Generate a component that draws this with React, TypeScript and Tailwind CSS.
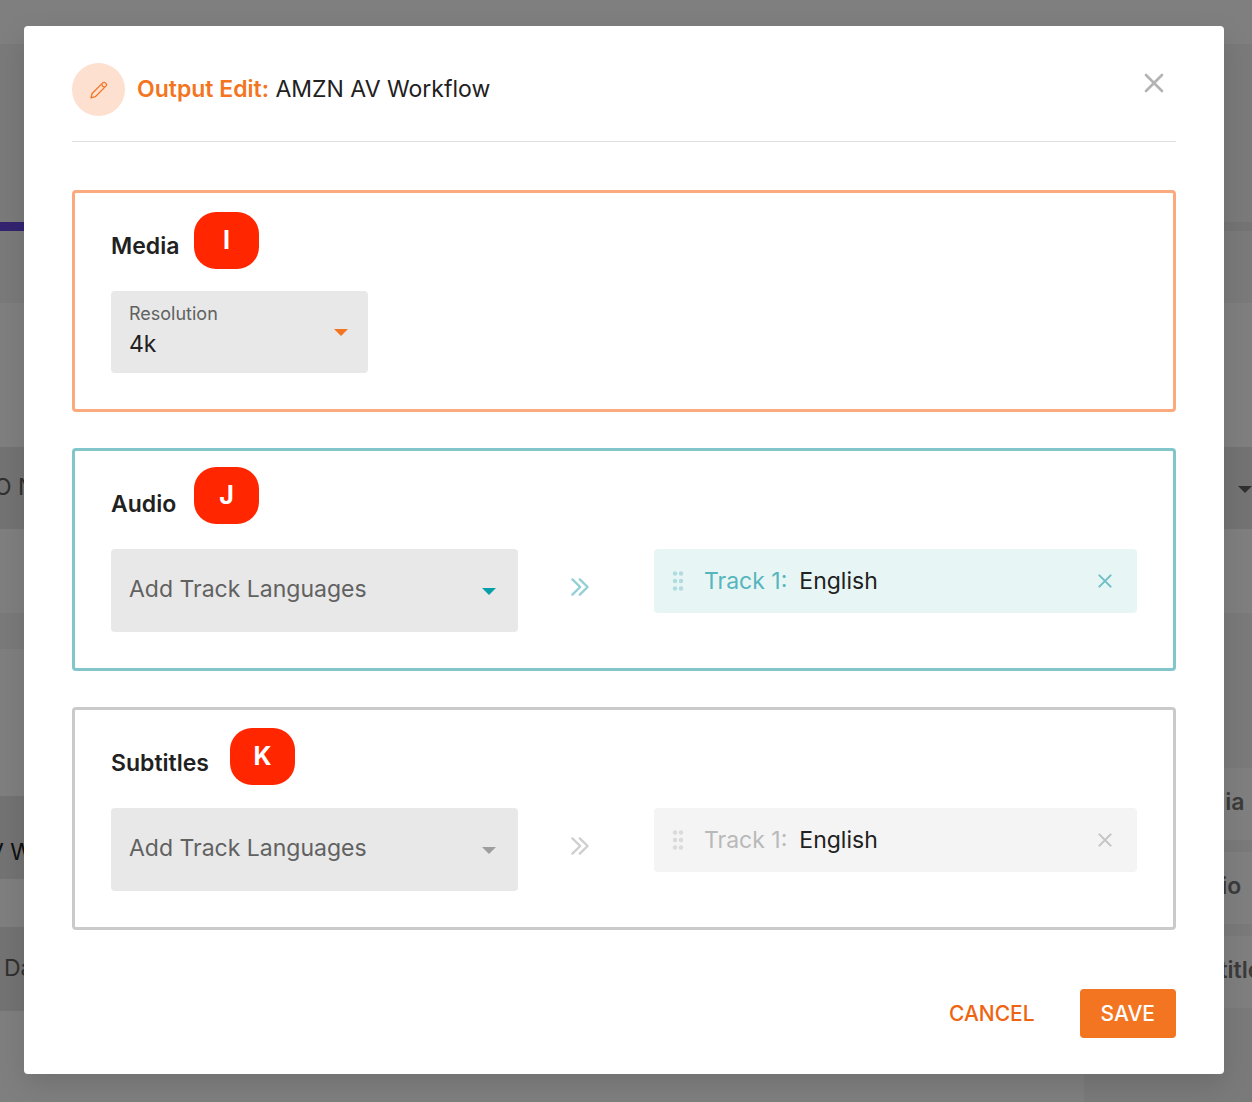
import React from "react";

function Caret({ className }: { className: string }) {
  return (
    <svg viewBox="0 0 14 7" aria-hidden="true" className={`pointer-events-none absolute h-[7px] w-[14px] ${className}`}>
      <path d="M0 0h14L7 7z" fill="currentColor" />
    </svg>
  );
}

function Cross({ className, strokeWidth }: { className: string; strokeWidth: number }) {
  return (
    <svg viewBox="0 0 20 20" aria-hidden="true" fill="none" stroke="currentColor" strokeWidth={strokeWidth} strokeLinecap="round" className={className}>
      <path d="M2 2l16 16M18 2L2 18" />
    </svg>
  );
}

function Pencil() {
  return (
    <svg viewBox="0 0 20 20" aria-hidden="true" fill="none" stroke="currentColor" strokeWidth="1.3" strokeLinejoin="round" className="size-5">
      <path d="M2 17.8l1.1-4.3L13.7 2.9a1.9 1.9 0 0 1 2.7 0l.5.5a1.9 1.9 0 0 1 0 2.7L6.3 16.7z" />
      <path d="M12.6 4.1c.4 1.8 1.3 2.7 3.1 3.1" />
    </svg>
  );
}

function Chevrons({ className }: { className: string }) {
  return (
    <svg viewBox="0 0 20 20" aria-hidden="true" fill="none" stroke="currentColor" strokeWidth="2.4" strokeLinecap="round" strokeLinejoin="round" className={`size-5 ${className}`}>
      <path d="M2.4 2.4l7.8 7.6-7.8 7.6M9.8 2.4l7.8 7.6-7.8 7.6" />
    </svg>
  );
}

function DragDots({ className }: { className: string }) {
  return (
    <svg viewBox="0 0 12 20" aria-hidden="true" fill="currentColor" className={`h-5 w-3 ${className}`}>
      {[2.5, 10, 17.5].map((y) => (
        <React.Fragment key={y}>
          <circle cx="3" cy={y} r="2.2" />
          <circle cx="9" cy={y} r="2.2" />
        </React.Fragment>
      ))}
    </svg>
  );
}

function Panel({ title, badge, border, badgePlace, children }: {
  title: string;
  badge: string;
  border: string;
  badgePlace: string;
  children: React.ReactNode;
}) {
  return (
    <section className={`relative rounded-[4px] border-[3px] p-9 ${border}`}>
      <h2 className="mb-7 text-[23px] leading-[34px] font-semibold">{title}</h2>
      <span className={`absolute flex h-[57px] w-[65px] items-center justify-center rounded-[22px] bg-[#ff2600] text-[25px] font-bold text-white ${badgePlace}`}>
        {badge}
      </span>
      {children}
    </section>
  );
}

function TrackRow({ id, caret, arrow, chip, dots, label, cross }: {
  id: string;
  caret: string;
  arrow: string;
  chip: string;
  dots: string;
  label: string;
  cross: string;
}) {
  return (
    <div className="grid grid-cols-[407fr_136fr_483fr] items-start">
      <div className="relative">
        <select id={id} aria-label="Add Track Languages" className="block h-[83px] w-full appearance-none rounded-[4px] bg-[#e8e8e8] pr-12 pb-0.5 pl-[18px] text-[23px] text-[#616161]">
          <option>Add Track Languages</option>
        </select>
        <Caret className={`top-[39px] right-[22px] ${caret}`} />
      </div>
      <div className="flex justify-center pt-7 pr-3">
        <Chevrons className={arrow} />
      </div>
      <div className={`flex h-16 items-center rounded-[4px] pr-[22px] pl-[18px] text-[23px] ${chip}`}>
        <DragDots className={dots} />
        <span className={`ml-5 ${label}`}>Track 1:</span>
        <span className="ml-3">English</span>
        <button aria-label="Remove track" className={`ml-auto flex size-5 items-center justify-center ${cross}`}>
          <Cross className="size-[14px]" strokeWidth={2.9} />
        </button>
      </div>
    </div>
  );
}

function PageBehind() {
  return (
    <div aria-hidden="true" className="absolute inset-0 flex flex-col overflow-hidden bg-[#f5f5f5] text-[23px] whitespace-nowrap">
      <div className="h-11 shrink-0 bg-white" />
      <div className="h-[178px] shrink-0" />
      <div className="flex h-[9px] shrink-0 bg-[#e8e8e8]">
        <div className="w-1/2 bg-[#6846e0]" />
      </div>
      <div className="h-[72px] shrink-0" />
      <div className="h-[310px] shrink-0 bg-white pt-36">
        <div className="relative flex h-[82px] items-center bg-[#e6e6e6] pb-0.5 text-[#616161]">
          <span className="-ml-1.5">O N</span>
          <Caret className="top-[39px] right-0 text-[#616161]" />
        </div>
      </div>
      <div className="h-9 shrink-0" />
      <div className="flex grow">
        <div className="grow bg-white pt-[147px]">
          <div className="flex h-[83px] items-end bg-[#e6e6e6] pb-2.5">
            <span className="-ml-3">V W</span>
          </div>
          <div className="mt-12 flex h-[84px] items-center bg-[#e6e6e6] pb-0.5 pl-1 text-[#616161]">Data</div>
        </div>
        <div className="flex w-[168px] flex-col gap-3 pt-[119px] font-semibold text-[#777777]">
          {["Media", "Audio", "Subtitles"].map((name) => (
            <div key={name} className="flex h-[72px] items-center bg-white pb-1 pl-[92px]">{name}</div>
          ))}
        </div>
      </div>
    </div>
  );
}

export default function App() {
  return (
    <div className="relative min-h-screen overflow-hidden font-['Inter',sans-serif] text-[#212121]">
      <PageBehind />
      <div className="relative min-h-screen bg-black/50 pt-[26px] pr-7 pb-7 pl-6">
        <div role="dialog" aria-modal="true" aria-labelledby="dialog-title" className="rounded-[4px] bg-white px-12 pt-[37px] pb-9 shadow-[0_10px_28px_rgba(0,0,0,0.12)]">
          <header className="flex items-center border-b border-[#e0e0e0] pb-[25px]">
            <span className="flex size-[53px] items-center justify-center rounded-full bg-[#fde0d0] text-[#f47521]">
              <Pencil />
            </span>
            <h1 id="dialog-title" className="ml-3 text-[23px]">
              <span className="font-semibold text-[#f47521]">Output Edit:</span> AMZN AV Workflow
            </h1>
            <button aria-label="Close" className="ml-auto flex h-10 w-11 items-center justify-center self-start text-[#b3b3b3]">
              <Cross className="size-5" strokeWidth={2.6} />
            </button>
          </header>

          <div className="mt-12 flex flex-col gap-9">
            <Panel title="Media" badge="I" border="border-[#fbaa7f]" badgePlace="top-[19px] left-[119px]">
              <div className="relative w-[257px]">
                <label htmlFor="resolution" className="pointer-events-none absolute top-3 left-[18px] text-[18px] leading-[22px] text-[#616161]">Resolution</label>
                <select id="resolution" className="block h-[82px] w-full appearance-none rounded-[4px] bg-[#e8e8e8] pt-6 pr-12 pl-[18px] text-[23px]">
                  <option>4k</option>
                </select>
                <Caret className="top-[38px] right-[20px] text-[#f47521]" />
              </div>
            </Panel>
            <Panel title="Audio" badge="J" border="border-[#82c6cb]" badgePlace="top-4 left-[119px]">
              <TrackRow
                id="audio-languages"
                caret="text-[#0a9fa8]"
                arrow="text-[#93d0d5]"
                chip="bg-[#e8f5f5]"
                dots="text-[#b0dcdf]"
                label="text-[#56b6bd]"
                cross="text-[#6dc0c6]"
              />
            </Panel>
            <Panel title="Subtitles" badge="K" border="border-[#cacaca]" badgePlace="top-[18px] left-[155px]">
              <TrackRow
                id="subtitle-languages"
                caret="text-[#9e9e9e]"
                arrow="text-[#cfcfcf]"
                chip="bg-[#f4f4f4]"
                dots="text-[#dadada]"
                label="text-[#b9b9b9]"
                cross="text-[#c4c4c4]"
              />
            </Panel>
          </div>

          <footer className="mt-[59px] flex items-center justify-end gap-6 text-[21px] font-medium">
            <button className="h-[49px] rounded-[4px] px-[21px] text-[#ee6511]">CANCEL</button>
            <button className="h-[49px] rounded-[4px] bg-[#f47521] px-[21px] text-white">SAVE</button>
          </footer>
        </div>
      </div>
    </div>
  );
}
